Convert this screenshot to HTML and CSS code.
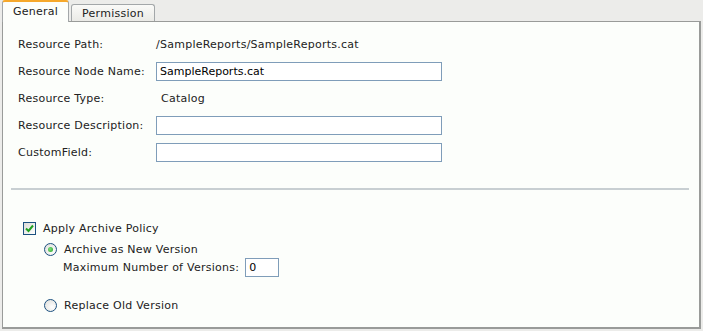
FILE: index.html
```html
<!DOCTYPE html>
<html lang="en">
<head>
  <meta charset="UTF-8">
  <title>Resource Properties</title>
  <link rel="stylesheet" href="styles.css">
</head>
<body>
  <div class="tabs">
    <div class="tab active">General</div>
    <div class="tab">Permission</div>
  </div>

  <div class="panel">
    <div class="fields">
      <div class="row">
        <span class="label">Resource Path:</span>
        <span class="value">/SampleReports/SampleReports.cat</span>
      </div>
      <div class="row">
        <span class="label">Resource Node Name:</span>
        <input class="text" type="text" value="SampleReports.cat">
      </div>
      <div class="row">
        <span class="label">Resource Type:</span>
        <span class="value indent">Catalog</span>
      </div>
      <div class="row">
        <span class="label">Resource Description:</span>
        <input class="text" type="text" value="">
      </div>
      <div class="row">
        <span class="label">CustomField:</span>
        <input class="text" type="text" value="">
      </div>
    </div>

    <hr class="sep">

    <div class="archive">
      <label class="check">
        <span class="box">
          <svg width="9" height="9" viewBox="0 0 9 9"><path d="M1 4.5 L3.5 7 L8 1.5" fill="none" stroke="#21a121" stroke-width="2"/></svg>
        </span>
        Apply Archive Policy
      </label>
      <div class="options">
        <label class="radio"><span class="dot on"></span>Archive as New Version</label>
        <div class="max">
          Maximum Number of Versions:
          <input class="small" type="text" value="0">
        </div>
        <label class="radio last"><span class="dot"></span>Replace Old Version</label>
      </div>
    </div>
  </div>
</body>
</html>
```

FILE: styles.css
```css
body {
  margin: 0;
  padding: 0 2px;
  background: #ececea;
  font-family: Tahoma, "DejaVu Sans", sans-serif;
  font-size: 11px;
  letter-spacing: 0.25px;
  color: #222;
}

.tabs {
  display: flex;
  align-items: flex-end;
  gap: 2px;
  height: 21px;
}

.tab {
  height: 17px;
  line-height: 17px;
  padding: 0 10px;
  border: 1px solid #a3a7a9;
  border-bottom: none;
  border-radius: 3px 3px 0 0;
  background: linear-gradient(#fafaf8, #eaeae6);
  box-sizing: border-box;
}

.tab.active {
  height: 22px;
  line-height: 20px;
  padding: 0 10px;
  margin-bottom: -1px;
  border-top: 2px solid #f6a82b;
  background: #fcfefb;
  position: relative;
}

.panel {
  width: 699px;
  height: 308px;
  box-sizing: border-box;
  border: 1px solid #999b99;
  border-width: 1px 2px 2px 1px;
  background: #fcfefb;
  padding: 13px 0 0 15px;
}

.fields {
  display: flex;
  flex-direction: column;
  gap: 8px;
}

.row {
  display: flex;
  align-items: center;
  height: 19px;
}

.label {
  width: 138px;
}

.value.indent {
  padding-left: 5px;
}

.text {
  width: 286px;
  height: 19px;
  box-sizing: border-box;
  border: 1px solid #7f9db9;
  padding: 0 3px;
  font: inherit;
  color: #000;
  background: #fff;
  margin: 0;
}

.sep {
  margin: 26px 10px 0 -7px;
  border: none;
  border-top: 2px solid #c8cfd2;
}

.archive {
  padding: 32px 0 0 5px;
}

.check {
  display: flex;
  align-items: center;
  gap: 7px;
}

.box {
  width: 13px;
  height: 13px;
  box-sizing: border-box;
  border: 1px solid #1c5180;
  background: linear-gradient(135deg, #dcdcd7, #fff);
  display: flex;
  align-items: center;
  justify-content: center;
}

.options {
  padding-left: 21px;
  padding-top: 8px;
}

.radio {
  display: flex;
  align-items: center;
  gap: 7px;
  height: 13px;
}

.dot {
  width: 13px;
  height: 13px;
  box-sizing: border-box;
  border-radius: 50%;
  border: 1px solid #1c5180;
  background: radial-gradient(circle at 65% 65%, #fff, #dcdcd7);
  display: flex;
  align-items: center;
  justify-content: center;
}

.dot.on::after {
  content: "";
  width: 5px;
  height: 5px;
  border-radius: 50%;
  background: radial-gradient(circle at 40% 40%, #7fe07f, #21a121);
}

.max {
  display: flex;
  align-items: center;
  gap: 6px;
  padding-left: 19px;
  margin-top: 2px;
  height: 19px;
}

.small {
  width: 34px;
  height: 19px;
  box-sizing: border-box;
  border: 1px solid #7f9db9;
  padding: 0 3px;
  font: inherit;
  margin: 0;
}

.radio.last {
  margin-top: 22px;
}
```
